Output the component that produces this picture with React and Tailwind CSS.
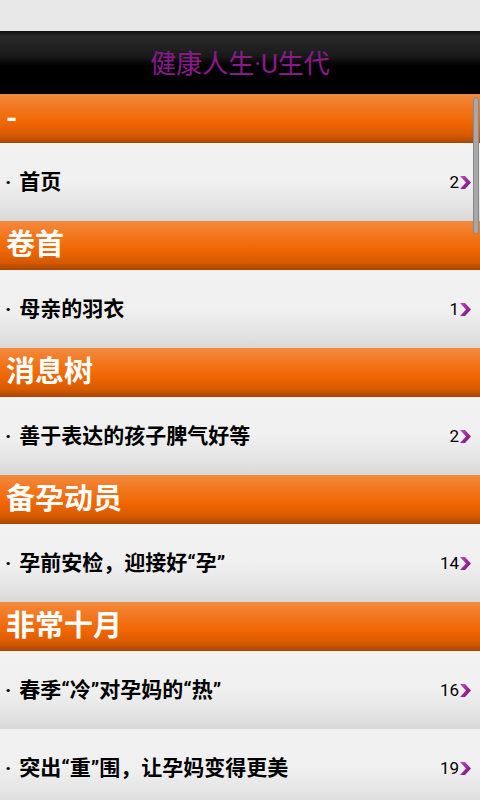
import React from 'react';

const sections = [
  { title: '-', items: [{ text: '首页', count: 2 }] },
  { title: '卷首', items: [{ text: '母亲的羽衣', count: 1 }] },
  { title: '消息树', items: [{ text: '善于表达的孩子脾气好等', count: 2 }] },
  { title: '备孕动员', items: [{ text: '孕前安检，迎接好“孕”', count: 14 }] },
  {
    title: '非常十月',
    items: [
      { text: '春季“冷”对孕妈的“热”', count: 16 },
      { text: '突出“重”围，让孕妈变得更美', count: 19 },
    ],
  },
];

const font = { fontFamily: 'Roboto, "Noto Sans CJK SC", sans-serif' };

const Chevron = () => (
  <svg width="13" height="15" viewBox="0 0 13 15" className="shrink-0">
    <defs>
      <linearGradient id="chev" x1="0" y1="0" x2="1" y2="1">
        <stop offset="0" stopColor="#c04ac0" />
        <stop offset="1" stopColor="#7a0a7a" />
      </linearGradient>
    </defs>
    <polygon points="1,1 6,1 12,7.5 6,14 1,14 7,7.5" fill="url(#chev)" />
  </svg>
);

export default function App() {
  return (
    <div className="w-[480px] h-[800px] overflow-hidden bg-[#e8e8e8] relative" style={font}>
      <div className="h-[31px] bg-[#e8e8e8]" />
      <div className="h-[63px] flex items-center justify-center pt-[2px] bg-[linear-gradient(to_bottom,#101010_0%,#2a2a2a_8%,#1a1a1a_40%,#000_55%,#000_100%)]">
        <span className="text-[26px] text-[#8a1a8a] leading-none">健康人生·U生代</span>
      </div>

      {sections.map((s, i) => (
        <div key={i}>
          <div className="h-[49px] flex items-center pl-[6px] bg-[linear-gradient(to_bottom,#f28a3e_0%,#f27318_35%,#f06500_60%,#d45a00_85%,#a84500_100%)]">
            <span className="text-[29px] font-bold text-white leading-none">{s.title}</span>
          </div>
          {s.items.map((it, j) => (
            <div
              key={j}
              className="h-[78px] flex items-center pl-[5px] pr-[8px] bg-[linear-gradient(to_bottom,#f2f2f2_0%,#f0f0f0_50%,#e4e4e4_80%,#d8d8d8_100%)]"
            >
              <span className="text-[21px] font-bold text-black flex-1 leading-none">
                <span className="mr-[8px]">·</span>
                {it.text}
              </span>
              <span className="text-[17px] text-black leading-none">{it.count}</span>
              <Chevron />
            </div>
          ))}
        </div>
      ))}

      <div className="absolute left-[473px] top-[97px] w-[6px] h-[137px] rounded-[3px] bg-[#a8a8a8] border border-[#888]" />
    </div>
  );
}
